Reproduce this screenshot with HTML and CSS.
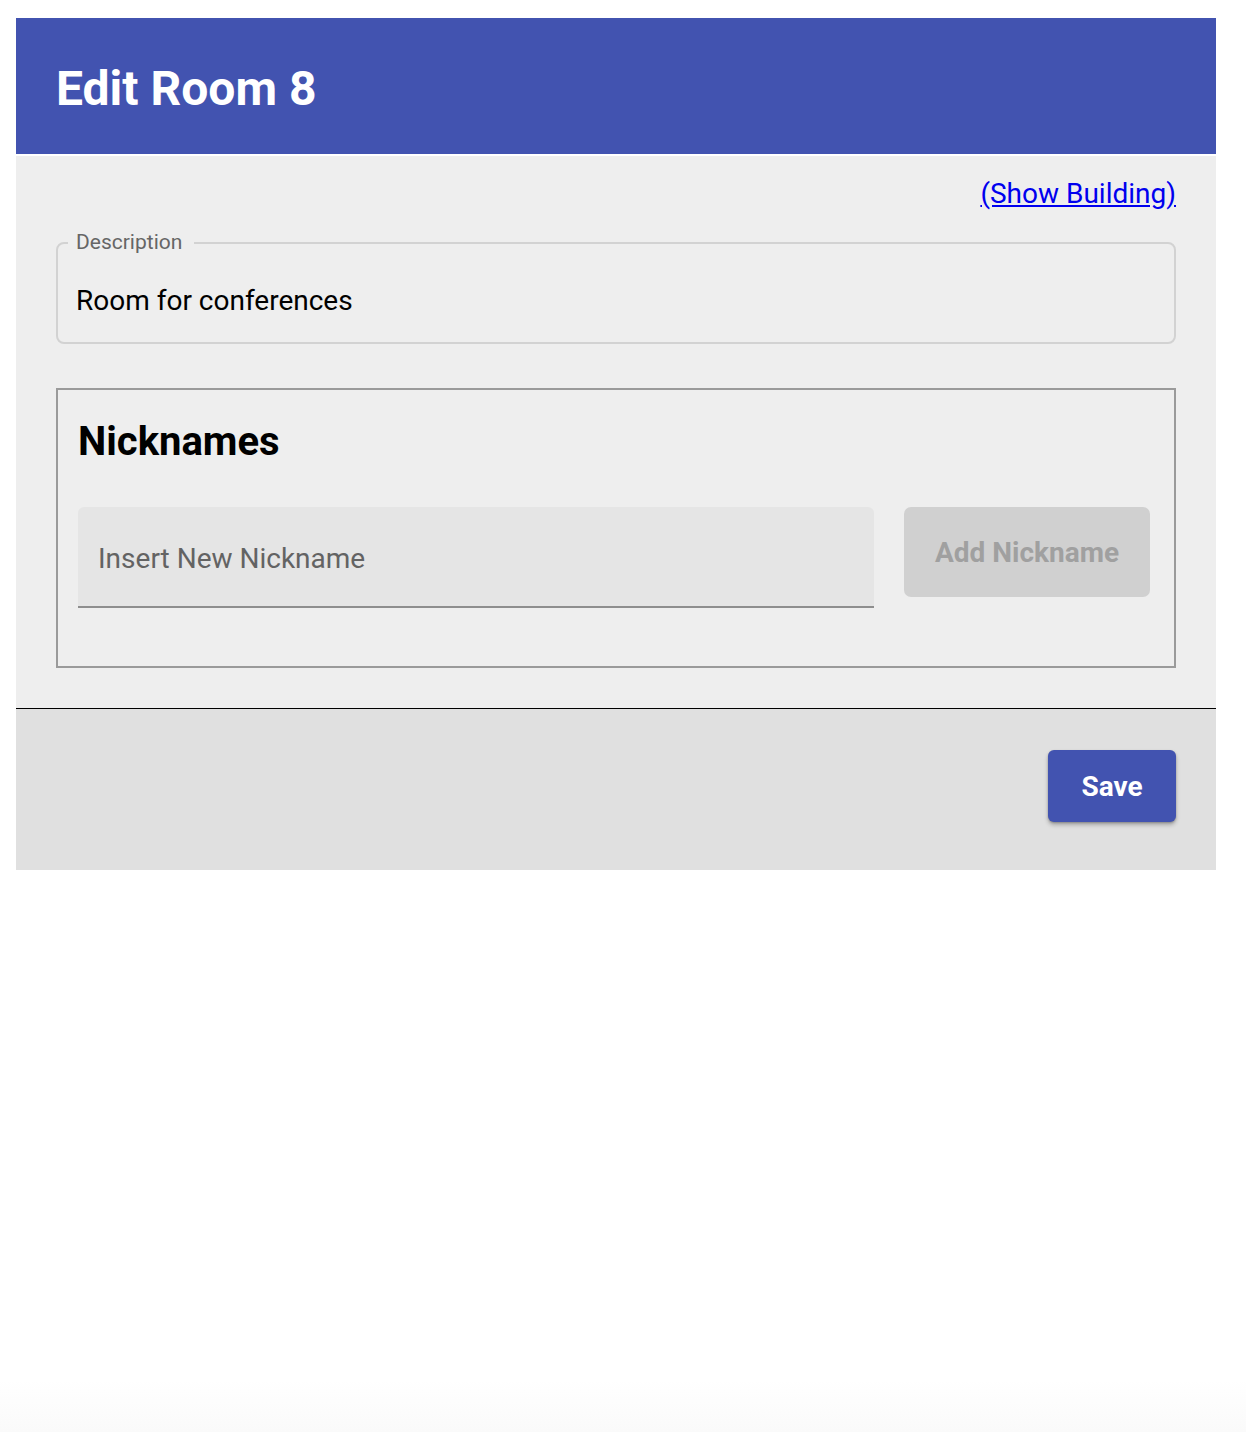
FILE: index.html
```html
<!DOCTYPE html>
<html lang="en">
<head>
<meta charset="utf-8">
<title>Edit Room 8</title>
<link rel="stylesheet" href="styles.css">
</head>
<body>
<div class="page">
  <header class="header">
    <h1 class="title">Edit Room 8</h1>
  </header>
  <main class="content">
    <div class="link-row"><a class="show-link" href="#">(Show Building)</a></div>
    <fieldset class="desc">
      <legend class="desc-label">Description</legend>
      <div class="desc-value">Room for conferences</div>
    </fieldset>
    <section class="nick-box">
      <h2 class="nick-title">Nicknames</h2>
      <div class="nick-row">
        <div class="nick-input"><span class="placeholder">Insert New Nickname</span></div>
        <button class="add-btn" type="button">Add Nickname</button>
      </div>
    </section>
  </main>
  <footer class="footer">
    <button class="save-btn" type="button">Save</button>
  </footer>
</div>
</body>
</html>
```
FILE: styles.css
```css
html, body {
  margin: 0;
  padding: 0;
}
body {
  min-height: 1432px;
  background: linear-gradient(to bottom, #ffffff 0, #ffffff 1380px, #fafafa 1432px);
  font-family: Roboto, "Noto Sans", "Liberation Sans", sans-serif;
}
.page {
  width: 1200px;
  margin-left: 16px;
  padding-top: 18px;
}
.header {
  height: 136px;
  box-sizing: border-box;
  background: #4253b0;
  display: flex;
  align-items: center;
  padding: 5px 0 0 40px;
}
.title {
  margin: 0;
  color: #ffffff;
  font-size: 48px;
  font-weight: 700;
  line-height: 1;
}
.content {
  margin-top: 2px;
  background: #eeeeee;
  padding: 22px 40px 40px;
}
.link-row {
  display: flex;
  justify-content: flex-end;
  line-height: 32px;
}
.show-link {
  color: #0000ee;
  font-size: 28px;
  text-decoration: underline;
}
.desc {
  margin: 22px 0 0;
  border: 2px solid #d2d2d2;
  border-radius: 8px;
  padding: 0 10px;
}
.desc-label {
  margin-left: 0;
  padding: 0 12px 0 8px;
  font-size: 21px;
  line-height: 21px;
  color: #666666;
}
.desc-value {
  padding: 0 8px;
  margin: 32px 0 25px;
  font-size: 28px;
  line-height: 32px;
  color: #000000;
}
.nick-box {
  margin-top: 44px;
  border: 2px solid #9a9a9a;
  padding: 28px 24px 58px 20px;
}
.nick-title {
  margin: 0 0 41px;
  font-size: 40px;
  font-weight: 700;
  line-height: 48px;
  color: #000000;
}
.nick-row {
  display: flex;
  align-items: flex-start;
  gap: 30px;
}
.nick-input {
  flex: 1;
  height: 101px;
  box-sizing: border-box;
  background: #e5e5e5;
  border-bottom: 2px solid #8e8e8e;
  border-radius: 6px 6px 0 0;
  display: flex;
  align-items: center;
  padding-left: 20px;
  padding-top: 4px;
}
.placeholder {
  font-size: 28px;
  color: #636363;
}
.add-btn {
  width: 246px;
  height: 90px;
  border: none;
  border-radius: 7px;
  background: #d0d0d0;
  color: #a0a0a0;
  font-family: inherit;
  font-size: 28px;
  font-weight: 700;
  padding: 0;
}
.footer {
  border-top: 1px solid #000000;
  background: #e0e0e0;
  padding: 41px 40px 48px;
  display: flex;
  justify-content: flex-end;
}
.save-btn {
  width: 128px;
  height: 72px;
  border: none;
  border-radius: 6px;
  background: #4253b0;
  color: #ffffff;
  font-family: inherit;
  font-size: 28px;
  font-weight: 700;
  padding: 0;
  box-shadow: 0 3px 4px rgba(0, 0, 0, 0.25), 0 1px 2px rgba(0, 0, 0, 0.2);
}
```
